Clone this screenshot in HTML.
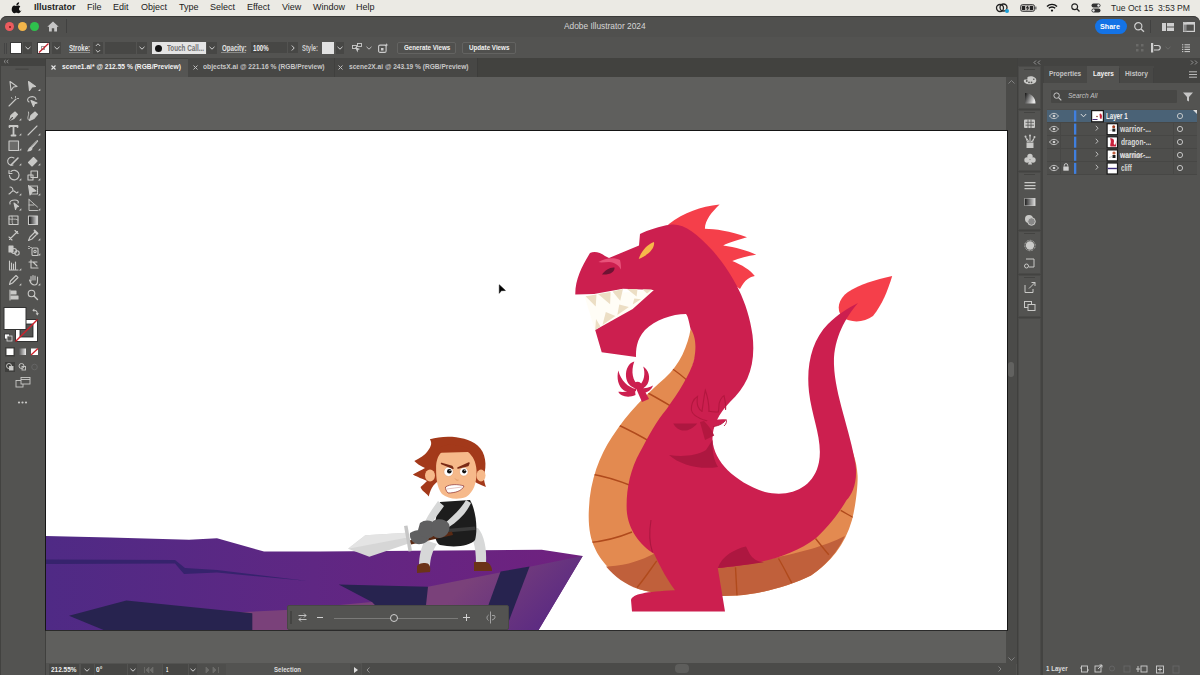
<!DOCTYPE html>
<html><head><meta charset="utf-8">
<style>
*{margin:0;padding:0;box-sizing:border-box}
html,body{width:1200px;height:675px;overflow:hidden;background:#e9e7e2;font-family:"Liberation Sans",sans-serif;position:relative}
.a{position:absolute}
.t{position:absolute;line-height:1;white-space:nowrap}
svg{position:absolute;overflow:visible}
#menubar{left:0;top:0;width:1200px;height:16px;background:#ebeae4;color:#222;font-size:9px}
#win{left:0;top:16px;width:1200px;height:659px;background:#535351;border-radius:7px 7px 0 0}
.ctl{color:#d8d8d8;font-size:7.2px}
.dk{background:#474745}
.chev{position:absolute}
</style></head><body>
<!-- MENUBAR -->
<div id="menubar" class="a">
 <svg style="left:13px;top:2px" width="9" height="11" viewBox="0 0 9 11"><path d="M6.1 0.2c0.1 0.9-0.3 1.7-0.8 2.200-0.5 0.5-1.200 0.900-1.900 0.800-0.1-0.800 0.3-1.600 0.800-2.100 0.600-0.500 1.300-0.900 1.900-0.900zM8.6 7.9c-0.300 0.600-0.500 1-0.900 1.600-0.600 0.900-1.300 1.700-2.200 1.700-0.800 0-1.100-0.500-2.100-0.500-1 0-1.300 0.500-2.100 0.500-0.900 0-1.600-0.900-2.100-1.700C-1.800 7.400-1 4.200 0.600 3.700c0.900-0.300 1.700 0.200 2.300 0.200 0.600 0 1.300-0.500 2.300-0.300 0.500 0 1.500 0.200 2.100 1.100-1.900 1.100-1.500 3.800 0.300 4.300z" fill="#111"/></svg>
 <span class="t" style="left:34px;top:3px;font-weight:bold">Illustrator</span>
 <span class="t" style="left:87px;top:3px">File</span>
 <span class="t" style="left:113px;top:3px">Edit</span>
 <span class="t" style="left:141px;top:3px">Object</span>
 <span class="t" style="left:179px;top:3px">Type</span>
 <span class="t" style="left:210px;top:3px">Select</span>
 <span class="t" style="left:247px;top:3px">Effect</span>
 <span class="t" style="left:282px;top:3px">View</span>
 <span class="t" style="left:313px;top:3px">Window</span>
 <span class="t" style="left:356px;top:3px">Help</span>
 <!-- status icons -->
 <svg style="left:996px;top:3px" width="14" height="10" viewBox="0 0 14 10"><circle cx="4" cy="5" r="3.5" fill="none" stroke="#222" stroke-width="1.3"/><circle cx="7.5" cy="4.5" r="3.5" fill="none" stroke="#222" stroke-width="1.3"/><circle cx="11" cy="8" r="2" fill="#1aa0d8"/></svg>
 <svg style="left:1020px;top:4px" width="17" height="8" viewBox="0 0 17 8"><rect x="0.6" y="0.6" width="14" height="6.8" rx="2" fill="#b8b6b2" stroke="#444" stroke-width="1"/><rect x="15.2" y="2.6" width="1.3" height="2.8" fill="#666"/><rect x="2" y="2" width="3" height="4" fill="#222"/><rect x="10" y="2" width="3" height="4" fill="#222"/><path d="M8.3 1L5.8 4.3H7.6L6.6 7L9.4 3.6H7.7Z" fill="#111"/></svg>
 <svg style="left:1046px;top:3px" width="12" height="9" viewBox="0 0 12 9"><path d="M1 3.5a7 7 0 0 1 10 0M2.8 5.3a4.5 4.5 0 0 1 6.4 0" fill="none" stroke="#111" stroke-width="1.4"/><circle cx="6" cy="7.6" r="1.1" fill="#111"/></svg>
 <svg style="left:1071px;top:3px" width="9" height="9" viewBox="0 0 9 9"><circle cx="3.7" cy="3.7" r="2.9" fill="none" stroke="#222" stroke-width="1.2"/><path d="M5.8 5.8L8.5 8.5" stroke="#222" stroke-width="1.3"/></svg>
 <svg style="left:1091px;top:3px" width="10" height="10" viewBox="0 0 10 10"><rect x="0.5" y="0.5" width="9" height="4" rx="2" fill="#333"/><rect x="0.5" y="5.5" width="9" height="4" rx="2" fill="#333"/><circle cx="7.5" cy="2.5" r="1.2" fill="#eee"/><circle cx="2.5" cy="7.5" r="1.2" fill="#eee"/></svg>
 <span class="t" style="left:1111px;top:3.5px;font-size:8.6px;color:#2a2a2a">Tue Oct 15</span>
 <span class="t" style="left:1158px;top:3.5px;font-size:8.6px;color:#2a2a2a">3:53 PM</span>
</div>
<div id="win" class="a"></div>
<!-- TITLEBAR -->
<div class="a" style="left:0;top:15.500px;width:1200px;height:22px;background:#50504e;border-radius:7px 7px 0 0;border-top:1px solid #3a3a38;border-bottom:1px solid #3e3e3c"></div>
<div class="a" style="left:5px;top:22px;width:9px;height:9px;border-radius:50%;background:#ec5b5e"></div>
<div class="a" style="left:8.5px;top:25.5px;width:2px;height:2px;border-radius:50%;background:#7a1518"></div>
<div class="a" style="left:18px;top:22px;width:9px;height:9px;border-radius:50%;background:#f2b54a"></div>
<div class="a" style="left:30px;top:22px;width:9px;height:9px;border-radius:50%;background:#2fc24d"></div>
<svg style="left:47px;top:21px" width="12" height="11" viewBox="0 0 12 11"><path d="M6 0.5L0.3 5.8H2V10.5H4.8V7.3H7.2V10.5H10V5.8H11.7Z" fill="#c6c6c6"/></svg>
<div class="a" style="left:66px;top:19px;width:1px;height:14px;background:#414140"></div>
<span class="t" style="left:563.75px;top:22.26px;font-size:8.55px;color:#d6d6d6;transform:scaleX(0.976);transform-origin:0 0;">Adobe Illustrator 2024</span>
<div class="a" style="left:1095px;top:19px;width:32px;height:15px;border-radius:8px;background:#1473e6"></div>
<span class="t" style="left:1100.40px;top:22.85px;font-size:7.97px;color:#ffffff;transform:scaleX(0.898);transform-origin:0 0;font-weight:bold;">Share</span>
<svg style="left:1134px;top:22px" width="11" height="10" viewBox="0 0 11 10"><circle cx="4.3" cy="4.3" r="3.6" fill="none" stroke="#cfcfcf" stroke-width="1.2"/><path d="M7 7L10 9.8" stroke="#cfcfcf" stroke-width="1.3"/></svg>
<div class="a" style="left:1150px;top:20px;width:1px;height:13px;background:#414140"></div>
<svg style="left:1162px;top:23px" width="12" height="8" viewBox="0 0 12 8"><rect x="0" y="0" width="4" height="8" fill="#cfcfcf"/><rect x="5" y="0" width="7" height="3.5" fill="#cfcfcf"/><rect x="5" y="4.5" width="7" height="3.5" fill="#cfcfcf"/></svg>
<svg style="left:1183px;top:22px" width="12" height="10" viewBox="0 0 12 10"><rect x="0.6" y="0.6" width="10.8" height="8.8" fill="none" stroke="#cfcfcf" stroke-width="1.2"/><rect x="0.6" y="0.6" width="3" height="8.8" fill="#888"/><rect x="0.6" y="0.6" width="10.8" height="2" fill="#cfcfcf"/></svg>
<!-- CONTROL BAR -->
<div class="a" style="left:0;top:37px;width:1200px;height:21px;background:#535351"></div>
<div class="a" style="left:4px;top:43px;width:1px;height:11px;background:#444"></div>
<div class="a" style="left:6px;top:43px;width:1px;height:11px;background:#444"></div>
<div class="a" style="left:10px;top:42px;width:12px;height:12px;background:#fff;border:1px solid #3a3a3a"></div>
<div class="a dk" style="left:23px;top:42px;width:9px;height:12px"></div>
<svg style="left:25px;top:46px" width="6" height="4" viewBox="0 0 6 4"><path d="M0.5 0.8L3 3.2L5.5 0.8" fill="none" stroke="#d0d0d0" stroke-width="1"/></svg>
<div class="a" style="left:37px;top:42px;width:13px;height:12px;background:#fff;border:1px solid #3a3a3a"></div>
<div class="a" style="left:41px;top:46px;width:4px;height:4px;border:1px solid #999"></div>
<svg style="left:38px;top:43px" width="11" height="10" viewBox="0 0 11 10"><path d="M1 9.5L10.5 0.5" stroke="#c4202a" stroke-width="1.2"/></svg>
<div class="a dk" style="left:52px;top:42px;width:9px;height:12px"></div>
<svg style="left:54px;top:46px" width="6" height="4" viewBox="0 0 6 4"><path d="M0.5 0.8L3 3.2L5.5 0.8" fill="none" stroke="#d0d0d0" stroke-width="1"/></svg>
<span class="t" style="left:68.70px;top:43.64px;font-size:8.70px;color:#e4e4e4;transform:scaleX(0.704);transform-origin:0 0;font-weight:bold;">Stroke:</span>
<div class="a dk" style="left:93px;top:42px;width:10px;height:12px"></div>
<svg style="left:95px;top:43px" width="6" height="10" viewBox="0 0 6 10"><path d="M0.8 3L3 0.8L5.2 3M0.8 7L3 9.2L5.2 7" fill="none" stroke="#d0d0d0" stroke-width="0.9"/></svg>
<div class="a dk" style="left:105px;top:42px;width:31px;height:12px"></div>
<div class="a dk" style="left:137px;top:42px;width:10px;height:12px"></div>
<svg style="left:139px;top:46px" width="6" height="4" viewBox="0 0 6 4"><path d="M0.5 0.8L3 3.2L5.5 0.8" fill="none" stroke="#d0d0d0" stroke-width="1"/></svg>
<div class="a" style="left:152px;top:42px;width:54px;height:12px;background:#e4e4e4"></div>
<div class="a" style="left:154.5px;top:44.5px;width:7px;height:7px;border-radius:50%;background:#111"></div>
<span class="t" style="left:166.90px;top:43.88px;font-size:8.41px;color:#707070;transform:scaleX(0.748);transform-origin:0 0;font-weight:bold;">Touch Call...</span>
<div class="a dk" style="left:207px;top:42px;width:10px;height:12px"></div>
<svg style="left:209px;top:46px" width="6" height="4" viewBox="0 0 6 4"><path d="M0.5 0.8L3 3.2L5.5 0.8" fill="none" stroke="#d0d0d0" stroke-width="1"/></svg>
<span class="t" style="left:221.50px;top:43.64px;font-size:8.70px;color:#e4e4e4;transform:scaleX(0.707);transform-origin:0 0;font-weight:bold;">Opacity:</span>
<div class="a dk" style="left:251px;top:42px;width:36px;height:11px"></div>
<span class="t" style="left:252.90px;top:43.88px;font-size:8.41px;color:#f0f0f0;transform:scaleX(0.725);transform-origin:0 0;font-weight:bold;">100%</span>
<div class="a dk" style="left:288px;top:42px;width:10px;height:11px"></div>
<svg style="left:291px;top:45px" width="4" height="6" viewBox="0 0 4 6"><path d="M0.8 0.5L3.2 3L0.8 5.5" fill="none" stroke="#d0d0d0" stroke-width="1"/></svg>
<span class="t" style="left:301.80px;top:43.64px;font-size:8.70px;color:#d0d0d0;transform:scaleX(0.675);transform-origin:0 0;font-weight:bold;">Style:</span>
<div class="a" style="left:322px;top:42px;width:12px;height:12px;background:#e2e2e2"></div>
<div class="a dk" style="left:336px;top:42px;width:8px;height:12px"></div>
<svg style="left:337px;top:46px" width="6" height="4" viewBox="0 0 6 4"><path d="M0.5 0.8L3 3.2L5.5 0.8" fill="none" stroke="#d0d0d0" stroke-width="1"/></svg>
<svg style="left:352px;top:43px" width="10" height="10" viewBox="0 0 10 10"><rect x="0.5" y="2.5" width="4" height="3" fill="none" stroke="#ccc" stroke-width="0.9"/><rect x="5.5" y="0.5" width="4" height="3" fill="none" stroke="#ccc" stroke-width="0.9"/><path d="M3 4L8 6L6 7L5.5 9.5Z" fill="#ccc"/></svg>
<svg style="left:366px;top:46px" width="6" height="4" viewBox="0 0 6 4"><path d="M0.5 0.8L3 3.2L5.5 0.8" fill="none" stroke="#c0c0c0" stroke-width="1"/></svg>
<svg style="left:378px;top:43px" width="11" height="10" viewBox="0 0 11 10"><rect x="0.6" y="2.1" width="7.5" height="7.3" rx="1.5" fill="none" stroke="#ccc" stroke-width="1.1"/><rect x="3" y="5" width="2.5" height="2.5" fill="#ccc"/><path d="M8.5 0L9 1.5L10.5 2L9 2.5L8.5 4L8 2.5L6.5 2L8 1.5Z" fill="#ccc"/></svg>
<div class="a" style="left:397px;top:42px;width:59px;height:12px;border:1px solid #636361;border-radius:2px;background:#50504e"></div>
<span class="t" style="left:403.50px;top:43.93px;font-size:8.12px;color:#f0f0f0;transform:scaleX(0.768);transform-origin:0 0;font-weight:bold;">Generate Views</span>
<div class="a" style="left:462px;top:42px;width:54px;height:12px;border:1px solid #636361;border-radius:2px;background:#50504e"></div>
<span class="t" style="left:468.60px;top:43.93px;font-size:8.12px;color:#f0f0f0;transform:scaleX(0.768);transform-origin:0 0;font-weight:bold;">Update Views</span>
<svg style="left:1136px;top:44px" width="8" height="8" viewBox="0 0 8 8"><rect x="0" y="0" width="2.5" height="2.5" fill="#6a6a68"/><rect x="5" y="0" width="2.5" height="2.5" fill="#6a6a68"/><rect x="0" y="5" width="2.5" height="2.5" fill="#6a6a68"/><rect x="5" y="5" width="2.5" height="2.5" fill="#6a6a68"/></svg>
<svg style="left:1151px;top:43px" width="10" height="10" viewBox="0 0 10 10"><rect x="0" y="0" width="2.2" height="9.5" fill="#cfcfcf"/><path d="M3 2.5H7A2.2 2.2 0 0 1 7 7H3" fill="none" stroke="#cfcfcf" stroke-width="1.2"/></svg>
<svg style="left:1165px;top:46px" width="6" height="4" viewBox="0 0 6 4"><path d="M0.5 0.8L3 3.2L5.5 0.8" fill="none" stroke="#6a6a68" stroke-width="1"/></svg>
<svg style="left:1182px;top:44px" width="8" height="8" viewBox="0 0 8 8"><path d="M2.5 0.8H8M2.5 3.1H8M2.5 5.4H8M2.5 7.6H8M0 0.8H1.3M0 3.1H1.3M0 5.4H1.3M0 7.6H1.3" stroke="#cfcfcf" stroke-width="1"/></svg>
<div class="a" style="left:68.5px;top:52px;width:21.5px;height:1px;background:#8a8a88"></div>
<div class="a" style="left:221.3px;top:52px;width:25px;height:1px;background:#8a8a88"></div>
<!-- REST -->
<div class="a" style="left:0;top:58px;width:45px;height:617px;background:#535351;border-left:1px solid #424240"></div>
<div class="a" style="left:0;top:58px;width:45px;height:8px;background:#434341"></div>
<div class="a" style="left:45px;top:58px;width:1px;height:617px;background:#40403e"></div>
<!-- tabs -->
<div class="a" style="left:46px;top:58px;width:971px;height:19px;background:#42423f"></div>
<div class="a" style="left:188px;top:58px;width:289px;height:19px;background:#474745"></div>
<div class="a" style="left:46px;top:59px;width:142px;height:18px;background:#555553"></div>
<div class="a" style="left:334px;top:58px;width:1px;height:19px;background:#40403e"></div>
<div class="a" style="left:477px;top:58px;width:1px;height:19px;background:#3d3d3b"></div>
<svg style="left:50.5px;top:65px" width="5" height="5" viewBox="0 0 5 5"><path d="M0.5 0.5L4.5 4.5M4.5 0.5L0.5 4.5" stroke="#e6e6e6" stroke-width="1.1"/></svg>
<span class="t" style="left:61.50px;top:62.83px;font-size:8.12px;color:#f2f2f2;transform:scaleX(0.820);transform-origin:0 0;font-weight:bold;">scene1.ai* @ 212.55 % (RGB/Preview)</span>
<svg style="left:192.5px;top:65px" width="5" height="5" viewBox="0 0 5 5"><path d="M0.5 0.5L4.5 4.5M4.5 0.5L0.5 4.5" stroke="#bdbdbd" stroke-width="1"/></svg>
<span class="t" style="left:203.20px;top:62.83px;font-size:8.12px;color:#c8c8c8;transform:scaleX(0.821);transform-origin:0 0;font-weight:bold;">objectsX.ai @ 221.16 % (RGB/Preview)</span>
<svg style="left:338px;top:65px" width="5" height="5" viewBox="0 0 5 5"><path d="M0.5 0.5L4.5 4.5M4.5 0.5L0.5 4.5" stroke="#bdbdbd" stroke-width="1"/></svg>
<span class="t" style="left:349.20px;top:62.83px;font-size:8.12px;color:#c8c8c8;transform:scaleX(0.812);transform-origin:0 0;font-weight:bold;">scene2X.ai @ 243.19 % (RGB/Preview)</span>
<!-- canvas -->
<div class="a" style="left:46px;top:77px;width:960px;height:587px;background:#5f5f5d"></div>
<div class="a" style="left:1006px;top:77px;width:11px;height:587px;background:#4b4b49"></div>
<div class="a" style="left:1017px;top:58px;width:1px;height:617px;background:#40403e"></div>
<div id="artboard" class="a" style="left:45px;top:130px;width:963px;height:501px;background:#fff;border:1px solid #151515;border-bottom-color:#2a2a2a"></div>
<svg style="left:1008px;top:80px" width="7" height="4" viewBox="0 0 7 4"><path d="M0.5 3.5L3.5 0.5L6.5 3.5" fill="none" stroke="#888" stroke-width="0.9"/></svg>
<div class="a" style="left:1008px;top:362px;width:6px;height:15px;border-radius:3px;background:#626260"></div>
<svg style="left:1008px;top:657px" width="7" height="4" viewBox="0 0 7 4"><path d="M0.5 0.5L3.5 3.5L6.5 0.5" fill="none" stroke="#888" stroke-width="0.9"/></svg>
<!-- status bar -->
<div class="a" style="left:46px;top:663px;width:970px;height:12px;background:#535351"></div>
<div class="a" style="left:362px;top:663px;width:654px;height:12px;background:#4b4b49"></div>
<div class="a" style="left:675px;top:664px;width:14px;height:9px;border-radius:4px;background:#5e5e5c"></div>
<svg style="left:998px;top:666px" width="4" height="6" viewBox="0 0 4 6"><path d="M0.5 0.5L3 3L0.5 5.5" fill="none" stroke="#888" stroke-width="0.9"/></svg>
<div class="a dk" style="left:49px;top:664px;width:30px;height:11px"></div>
<span class="t" style="left:51.00px;top:666.43px;font-size:8.12px;color:#f0f0f0;transform:scaleX(0.795);transform-origin:0 0;font-weight:bold;">212.55%</span>
<div class="a dk" style="left:81px;top:664px;width:13px;height:11px"></div>
<svg style="left:84px;top:668px" width="6" height="4" viewBox="0 0 6 4"><path d="M0.5 0.8L3 3.2L5.5 0.8" fill="none" stroke="#d0d0d0" stroke-width="1"/></svg>
<div class="a dk" style="left:95px;top:664px;width:32px;height:11px"></div>
<span class="t" style="left:96.00px;top:666.43px;font-size:8.12px;color:#f0f0f0;transform:scaleX(0.813);transform-origin:0 0;font-weight:bold;">0&#176;</span>
<div class="a dk" style="left:128px;top:664px;width:9px;height:11px"></div>
<svg style="left:130px;top:668px" width="6" height="4" viewBox="0 0 6 4"><path d="M0.5 0.8L3 3.2L5.5 0.8" fill="none" stroke="#d0d0d0" stroke-width="1"/></svg>
<div class="a" style="left:137px;top:664px;width:25px;height:11px;background:#4e4e4c"></div>
<svg style="left:144px;top:667px" width="16" height="6" viewBox="0 0 16 6"><path d="M0.5 0V6M5 0L2 3L5 6Z M9 0L6 3L9 6Z" fill="#6c6c6a" stroke="#6c6c6a" stroke-width="0.8"/></svg>
<div class="a dk" style="left:163px;top:664px;width:25px;height:11px"></div>
<span class="t" style="left:166.00px;top:666.43px;font-size:8.12px;color:#f0f0f0;transform:scaleX(0.511);transform-origin:0 0;font-weight:bold;">1</span>
<div class="a dk" style="left:189px;top:664px;width:8px;height:11px"></div>
<svg style="left:190px;top:668px" width="6" height="4" viewBox="0 0 6 4"><path d="M0.5 0.8L3 3.2L5.5 0.8" fill="none" stroke="#d0d0d0" stroke-width="1"/></svg>
<div class="a" style="left:197px;top:664px;width:29px;height:11px;background:#4e4e4c"></div>
<svg style="left:206px;top:667px" width="16" height="6" viewBox="0 0 16 6"><path d="M0 0L3 3L0 6Z M7 0L10 3L7 6Z M12.5 0V6" fill="#6c6c6a" stroke="#6c6c6a" stroke-width="0.8"/></svg>
<span class="t" style="left:274.40px;top:666.43px;font-size:8.12px;color:#dddddd;transform:scaleX(0.751);transform-origin:0 0;font-weight:bold;">Selection</span>
<div class="a" style="left:350px;top:664px;width:11px;height:11px;background:#4e4e4c"></div>
<svg style="left:354px;top:667px" width="4" height="6" viewBox="0 0 4 6"><path d="M0 0L4 3L0 6Z" fill="#ddd"/></svg>
<svg style="left:366px;top:667px" width="4" height="6" viewBox="0 0 4 6"><path d="M3.5 0.5L1 3L3.5 5.5" fill="none" stroke="#999" stroke-width="0.9"/></svg>
<!-- right side -->
<div class="a" style="left:1018px;top:58px;width:182px;height:617px;background:#434341"></div>
<div class="a" style="left:1044px;top:66px;width:110px;height:17px;background:#484846"></div>
<svg style="left:1033px;top:60px" width="8" height="5" viewBox="0 0 8 5"><path d="M3 0.5L1 2.5L3 4.5M7 0.5L5 2.5L7 4.5" fill="none" stroke="#aaa" stroke-width="0.8"/></svg>
<svg style="left:1190px;top:60px" width="8" height="5" viewBox="0 0 8 5"><path d="M1 0.5L3 2.5L1 4.5M5 0.5L7 2.5L5 4.5" fill="none" stroke="#aaa" stroke-width="0.8"/></svg>
<div id="strip" class="a" style="left:1018px;top:66px;width:23px;height:609px"></div>
<div class="a" style="left:1043px;top:83px;width:157px;height:592px;background:#535351"></div>
<div class="a" style="left:1087px;top:66px;width:32px;height:17px;background:#535351"></div>
<div class="a" style="left:1119px;top:68px;width:1px;height:15px;background:#414140"></div>
<div class="a" style="left:1153px;top:68px;width:1px;height:15px;background:#414140"></div>
<span class="t" style="left:1048.90px;top:70.32px;font-size:7.54px;color:#c4c4c4;transform:scaleX(0.864);transform-origin:0 0;font-weight:bold;">Properties</span>
<span class="t" style="left:1092.90px;top:70.32px;font-size:7.54px;color:#f4f4f4;transform:scaleX(0.860);transform-origin:0 0;font-weight:bold;">Layers</span>
<span class="t" style="left:1124.90px;top:70.32px;font-size:7.54px;color:#c4c4c4;transform:scaleX(0.882);transform-origin:0 0;font-weight:bold;">History</span>
<svg style="left:1189px;top:71px" width="8" height="7" viewBox="0 0 8 7"><path d="M0 0.8H8M0 3.5H8M0 6.2H8" stroke="#bbb" stroke-width="1"/></svg>
<!-- ARTWORK -->
<svg style="left:46px;top:131px;overflow:hidden" width="960" height="499" viewBox="46 131 960 499">
<defs>
<linearGradient id="cliffTop" x1="46" y1="0" x2="580" y2="0" gradientUnits="userSpaceOnUse"><stop offset="0" stop-color="#4f2a85"/><stop offset="0.5" stop-color="#5f2783"/><stop offset="1" stop-color="#70217f"/></linearGradient>
<linearGradient id="cliffFront" x1="480" y1="570" x2="540" y2="631" gradientUnits="userSpaceOnUse"><stop offset="0" stop-color="#7a417a"/><stop offset="1" stop-color="#5c2b82"/></linearGradient>
</defs>
<!-- CLIFF -->
<path d="M40 535.900L110 537.500L189 539.800L217 538.200L264 551.500L320 551.500L541.700 549.800L582.700 556.100L538 631H40Z" fill="url(#cliffTop)"/>
<path d="M240 612.200L285.900 610L372 602L428 586.800L532 566.200L582.700 556.100L538 631H240Z" fill="url(#cliffFront)"/>
<path d="M40 559.500L175 560L185 568L217 570L308 581L217 572.500L184 574L175 563.500L40 564Z" fill="#36236d"/>
<path d="M69 615.700L126.300 600.500L252.300 613.300L252.300 631H106Z" fill="#27234f"/>
<path d="M338.700 584.400L428 586.800L423.200 631H400L372 602Z" fill="#27234f"/>
<path d="M500.600 571.500L529.600 566.500L505 631H479Z" fill="#27234f"/>
<!-- DRAGON: orange belly -->
<path d="M690.600 329C688 345 680 365 665 378C648 393 628 412 612 437C600 455 590 480 588.900 508.900C588 525 590 538 594.800 548C600 560 612 575 638.400 589C660 596 700 597 737 595.500C760 594 790 586 811 575.500C830 563 845 545 852 520C857 500 858 480 857.500 475C857 462 852 448 846 436L820 515L720 540L660 480L700 340Z" fill="#e38a50"/>
<!-- dark band -->
<path d="M606 566.400C615 577 625 584 638.400 589C660 596 700 597 737 595.500C760 594 790 586 811 575.500C825 566 837 553 845 536C835 541 822 546 811 548.900C795 553 780 557 760 561C745 564 730 567 717.800 568L654 553.800C641 560 630 565 608 566.400Z" fill="#c0603b"/>
<!-- stripes -->
<clipPath id="orClip"><path d="M690.600 329C688 345 680 365 665 378C648 393 628 412 612 437C600 455 590 480 588.900 508.900C588 525 590 538 594.800 548C600 560 612 575 638.400 589C660 596 700 597 737 595.500C760 594 790 586 811 575.500C830 563 845 545 852 520C857 500 858 480 857.500 475C857 462 852 448 846 436L820 515L720 540L660 480L700 340Z"/></clipPath>
<g fill="none" stroke="#b04a1c" stroke-width="1.400" clip-path="url(#orClip)">
<path d="M668 366C676 371 684 377 692 385"/>
<path d="M644 391C654 396 664 402 674 408"/>
<path d="M612 422C625 428 638 434 652 443"/>
<path d="M585 473C600 475 615 479 632 486"/>
<path d="M585 543C600 542 615 539 632 532"/>
<path d="M637 587.500C645 578 650 570 656.700 560.800"/>
<path d="M735.500 567.400L737 595.500"/>
<path d="M778.500 558.500C783 566 787 574 791.800 583"/>
<path d="M815.500 538.500C820 544 824 549 828.800 554.800"/>
<path d="M840.700 510.400C845 513 849 515 854 518"/>
</g>
<!-- crest -->
<path d="M668.300 224.500C685 212 700 207 719.600 204.600C712 212 705 220 704.900 228.800C715 229 730 231 747 237.200C738 240 729 242 723.200 245.600C735 247 748 251 756.200 254.800C748 256 739 258 732.300 261.100C742 265 750 270 754.800 275.900C750 277 745 279 740 289L700 260L670 240Z" fill="#f53f4a"/>
<!-- tail leaf -->
<path d="M892.200 276C875 280 860 284 848 292C838 299 836 310 842.300 317C850 323 864 323 873 316C882 305 888 290 892.200 276Z" fill="#f53f4a"/>
<path d="M584.600 296.400L655 289.600L640 320L595.200 331Z" fill="#fffdf6"/>
<!-- red body -->
<path d="M590 253C594 251 600 252 605 256L609 258L639 245.500L640 234C648 230 660 226 670 224.700C684 223 696 233 713 251C731 272 748 300 752.500 335C756 365 748 385 730 402C718 414 712 428 712.500 440C714 462 735 482 765 492C790 498 814 488 819 462C823 440 812 418 809 392C806 365 812 340 828 324C838 314 848 308 858 303C845 318 833 340 834 365C835 395 850 430 855.500 464C858 482 852 495 846.600 500C838 515 825 530 815.500 538.500C800 550 780 558 759.200 562.200C745 565 730 567 717.800 568L725 611.500H632L631 600C633 594 645 591.700 675 590.300C664 575 658 562 654 553.800C640 545 628 530 626.700 510C626 490 630 470 640 452C648 437 657 420 666.700 408.900C678 393 690 375 694 360C697 345 695 335 690.600 329C689 322 688 316 686 314C672 314 655 320 645 330C636 340 636 350 636 357L601.700 352.200L595.200 330L632.700 308.900L653.900 290L623 288.700L594 294L575.300 294.600C575 280 582 266 590 253Z" fill="#cc1f4f"/>
<!-- shading -->
<path d="M717.800 568C722 556 735 549 746 546.600C748 550 749 554 752 557C756 561 760 562 763.700 562.200C745 565 730 567 717.800 568Z" fill="#ad1740"/>
<path d="M669 455C680 465 700 470 718 467C714 460 712 452 712.500 440L706 450C696 456 682 457 669 455Z" fill="#ad1740"/>
<path d="M673.300 423.400L697.200 423.400C693 428 689 430.500 684 430.500C679 430.500 675 427 673.300 423.400Z" fill="#ad1740"/>
<path d="M651 520C649 532 650 545 652.500 552.300" fill="none" stroke="#ad1740" stroke-width="1.100"/>
<!-- teeth -->

<g fill="#ecdec4">
<path d="M585.600 296.200L595.700 306.500L596.500 294.500Z"/>
<path d="M598 294L610.100 304.200L610.600 292Z"/>
<path d="M612.500 291.500L620.200 300.700L623 289Z"/>
<path d="M627 289L636.600 296.400L637.500 289Z"/>
<path d="M642.400 289.200L647 293.500L652 289.500Z"/>
<path d="M595.200 330L596 319L600.500 326.600Z"/>
<path d="M602.500 325L605.800 312L615.400 316.100Z"/>
<path d="M617.300 315L619.300 304.500L628.900 307Z"/>
<path d="M632.700 304.500L634.300 298.500L641 299.200Z"/>
</g>
<!-- face details -->
<path d="M638.700 259C641 252 646 245 654 242C655 249 648 255 638.700 259Z" fill="#f7b84a"/>
<path d="M602 274.500C605 270 610 267 614.500 267.500C615 272 610 275 602 274.500Z" fill="#6e1333"/>
<path d="M598.400 262C605 258 614 257 620 260C621 264 621 267 621 269.500C619 266 615 262 609 262C605 262 601 263 598.400 262Z" fill="#e8527a"/>
<!-- left claw -->
<g fill="#cc1f4f">
<circle cx="637.500" cy="385.500" r="3.800"/>
<path d="M635 386L640.500 383L649 399L642 402Z"/>
<path d="M636 389C628 387 621 381 618.300 370.400C616.500 378 618 386 624 390.500C628 393 633 393 636 391Z"/>
<path d="M635 390.500C629 392 623 392 618.300 391.800C620 396 628 398.500 635.500 395Z"/>
<path d="M638 385C633 381 630.500 372 634.300 361.600C629 363 625.500 369 626 376.500C626.500 383 631 387.500 636 388.500Z"/>
<path d="M639 386C644.500 381 645.500 373 643.200 366.400C648.500 370 651 377 647.500 384C645.500 387.500 642 389.500 639 389.500Z"/>
<path d="M640 388.500C645 388.500 650 387.500 653 385.600C651.500 390.500 646 394 640 393Z"/>
</g>
<!-- right claw outline -->
<path d="M704 421C708 425 712 430 714.200 435.500L705 440L700 422Z" fill="#b3173f"/>
<g fill="none" stroke="#b3173f" stroke-width="1.100" stroke-linecap="round">
<path d="M706.900 420.900C700 419 692 415 691.400 410C691 405 693 399 697.500 396.400C697 400 697 404 698 406.500C699 409 700 410.500 702 411.300"/>
<path d="M702 411.300C703 405 704 396 705.300 390.300C707 395 709 403 709 411.300"/>
<path d="M709 411.300C712 412 716 412 718.300 411.900C719 408 719 405 719.100 403.700C720 400 722 397 724 395.600C725 400 726 405 725.600 409.400"/>
</g>
<path d="M706 421C712 420 720 419 726 419.500C724 423 719 426 713 426.500Z" fill="#cc1f4f"/>
<path d="M713 426.500C719 426 724 423 726 419.500C727 421 726.500 424 724 426" fill="none" stroke="#b3173f" stroke-width="0.9"/>
<!-- WARRIOR -->
<g>
<path d="M425 540C421 548 419 556 419 566L430 567C430 558 433 550 437 544Z" fill="#d7d8d8"/>
<path d="M466 531C473 536 476 546 476 563L486 564C487 548 484 535 478 528Z" fill="#d7d8d8"/>
<path d="M417 567C417 564 421 563 425 563C429 563 431 566 430 572L417 573Z" fill="#6b3318"/>
<path d="M474 562L486 562C490 563 492 567 492 571L474 571Z" fill="#6b3318"/>
<path d="M440 502L470 500C476 510 478 530 475 540C470 546 455 548 440 545C432 541 434 520 440 502Z" fill="#1d1d1d"/>
<path d="M466 500L471 503C466 514 457 522 449 527L444 524C452 517 461 509 466 500Z" fill="#d7d8d8"/>
<path d="M438 501C433 508 427 516 424 524L430 526C434 519 440 512 444 506Z" fill="#d7d8d8"/>
<path d="M446 529L475 526.500L475.500 530L447 532.500Z" fill="#3a3a3a"/><path d="M409 540.500L452 531.500L453 535L411 544.500Z" fill="#5a2a14"/>
<path d="M410 533C416 529 424 529 428 533C431 538 428 543 421 544C414 545 409 540 410 533Z" fill="#5f5f60"/>
<path d="M420 523C425 519 432 520 436 524C438 530 436 536 430 538C424 539 419 535 418 530Z" fill="#5f5f60"/>
<path d="M433 521C438 518 446 519 449 524C451 530 447 537 440 538C434 539 431 533 431 528Z" fill="#5f5f60"/>
<path d="M348 548.700L365.300 535.300L406.700 532.700L409.300 543.300L369.300 556.700Z" fill="#d6d6d6"/>
<path d="M348 548.700L365.300 535.300L406.700 532.700L407.500 537.500Z" fill="#e4e4e4"/>
<path d="M404 526L407.500 525.500L412 551L408.500 551.500Z" fill="#c6c6c6"/>
<path d="M429.900 439.300C445 435 466 436 477.600 445.600C486 453 487 465 483.800 476.700C484 481 485 484 485.900 487C480 485 475 482 472 480L440 480C432 484 430 492 428.800 496.400C425 492 421 490 420.600 487C423 485 425 483 427 481C420 478 415 476 412.800 474.600C417 472 422 470 425 468C420 466 416 463 414.300 461.100C420 458 425 455 427 452C430 448 433 444 429.900 439.300Z" fill="#a3391a"/>
<ellipse cx="430" cy="475.500" rx="5" ry="6" fill="#f6b98a"/>
<ellipse cx="481" cy="475.500" rx="4.500" ry="6" fill="#f6b98a"/>
<path d="M441 452.800L468 452C473 456 476 462 476.500 470C477 482 474 492 466 497C458 500 448 499 442 494C437 488 436 478 436.100 468C436 461 438 456 441 452.800Z" fill="#f6b98a"/>
<path d="M436 455C445 449 460 449 472 452C468 447 458 444 447 445C440 446 437 450 436 455Z" fill="#a3391a"/>
<circle cx="448.600" cy="471.800" r="4.700" fill="#fff" stroke="#e0a070" stroke-width="0.6"/><circle cx="463.800" cy="471.800" r="4.300" fill="#fff" stroke="#e0a070" stroke-width="0.6"/>
<circle cx="449.300" cy="471.300" r="2.300" fill="#111"/><circle cx="464.200" cy="471.300" r="2.100" fill="#111"/><circle cx="450" cy="470.500" r="0.600" fill="#fff"/><circle cx="464.900" cy="470.500" r="0.600" fill="#fff"/>
<path d="M441.500 463.500L453 468.300L452 466.500Z M458 468L469 463L468 465.500Z" stroke="#7a2a15" stroke-width="1.500" fill="#7a2a15" stroke-linejoin="round"/>
<path d="M455 478.500C456 480 457 480.500 458.500 480" fill="none" stroke="#d89060" stroke-width="0.8"/>
<path d="M445.500 487C450 484 458 484 464 486C462 491 455 493 448 493C446 491 445.500 489 445.500 487Z" fill="#fff" stroke="#8a2a2a" stroke-width="0.700"/>
<path d="M447 489C452 488 457 488 462 487" stroke="#c88" stroke-width="0.500"/>
</g>
</svg>
<svg style="left:498px;top:284px" width="8" height="10" viewBox="498 284 8 10"><path d="M499.300 284.800L505.400 290.500L501.300 290.700L499.300 293.300Z" fill="#000" stroke="#111" stroke-width="0.6" stroke-linejoin="round"/></svg>
<!-- zoom overlay -->
<div class="a" style="left:287px;top:605px;width:222px;height:25px;background:#535351;border:1px solid #474745;border-radius:2px"></div>
<div class="a" style="left:290px;top:611px;width:1.500px;height:13px;background:#444442"></div>
<svg style="left:298px;top:613px" width="9" height="9" viewBox="0 0 9 9"><path d="M0.500 2.500H8M6 0.500L8 2.500L6 4.500M8.500 6.500H1M3 4.500L1 6.500L3 8.500" fill="none" stroke="#cfcfcf" stroke-width="0.900"/></svg>
<div class="a" style="left:317px;top:617px;width:6px;height:1.200px;background:#d0d0d0"></div>
<div class="a" style="left:334px;top:618px;width:124px;height:1px;background:#7a7a78"></div>
<div class="a" style="left:390px;top:614px;width:8px;height:8px;border-radius:50%;border:1.200px solid #d0d0d0;background:#535351"></div>
<div class="a" style="left:463px;top:617px;width:7px;height:1.200px;background:#d0d0d0"></div>
<div class="a" style="left:466px;top:614px;width:1.200px;height:7px;background:#d0d0d0"></div>
<svg style="left:486px;top:611px" width="10" height="13" viewBox="0 0 10 13"><path d="M4.500 0.500V12.500M2.500 4C0.500 5.500 0.500 8 2.500 9.500M6 4.500H8.500C9.500 6 9 8 7 8.500L6 9" fill="none" stroke="#aaa" stroke-width="0.900"/></svg>
<!-- ICON STRIP -->
<svg style="left:1016px;top:58px" width="28" height="617" viewBox="1016 58 28 617">
<g fill="#535351" stroke="#4a4a48" stroke-width="1">
<rect x="1018.500" y="66.500" width="22" height="42"/>
<rect x="1018.500" y="110.500" width="22" height="60"/>
<rect x="1018.500" y="172.500" width="22" height="57"/>
<rect x="1018.500" y="231.500" width="22" height="42"/>
<rect x="1018.500" y="275.500" width="22" height="41"/>
<rect x="1018.500" y="318.500" width="22" height="360"/>
</g>
<g stroke="#444442" stroke-width="1.2">
<path d="M1024 69.500H1035M1024 112.500H1035M1024 174.500H1035M1024 233.500H1035M1024 277.500H1035"/>
</g>
<g fill="#c9c9c7">
<path d="M1030.500 76.300C1034 76.300 1036.300 78 1036.300 80.200C1036.300 82.800 1033.500 84.300 1029.800 84.300C1026.300 84.300 1023.800 83 1023.800 80.800C1023.800 79.600 1025 79.300 1026.200 79.500C1027.300 79.700 1027.800 79 1027.300 78.200C1027 77.200 1028.500 76.300 1030.500 76.300Z"/>
<path d="M1025 93V103.500H1035.500C1035.500 97.500 1031 93 1025 93Z" fill="url(#gq)"/>
<rect x="1024" y="119.500" width="11" height="8.500" rx="1"/>
<path d="M1026.500 142.500H1033.500V148H1026.500Z"/><path d="M1027.500 142L1025.500 136.500M1030 142V135.500M1032.500 142L1034.500 137M1029 142L1027 138.500M1031 142L1033.500 139" stroke="#c9c9c7" stroke-width="1" fill="none"/><circle cx="1025.500" cy="136.500" r="1"/><circle cx="1030" cy="135.500" r="1"/><circle cx="1034.500" cy="137" r="1"/>
<circle cx="1030" cy="156.500" r="2.700"/><circle cx="1027" cy="160" r="2.700"/><circle cx="1033" cy="160" r="2.700"/><path d="M1029.200 160L1028 164.500H1032L1030.800 160Z"/>
<path d="M1024.500 182H1035.500V183.300H1024.500Z M1024.500 185H1035.500V186.300H1024.500Z M1024.500 188H1035.500V189.300H1024.500Z"/>
<circle cx="1029" cy="219" r="4"/>
<circle cx="1030" cy="245.500" r="4.200"/>
</g>
<g fill="none" stroke="#c9c9c7" stroke-width="1">
<g fill="#535351" stroke="none"><circle cx="1026.800" cy="81" r="0.900"/><circle cx="1029" cy="82.300" r="0.900"/><circle cx="1031.500" cy="82.300" r="0.900"/><circle cx="1033.800" cy="79.200" r="0.800"/></g>
<path d="M1025.500 122.300H1034M1025.500 125.200H1034M1028 119.500V128M1031 119.500V128" stroke="#535351" stroke-width="0.8"/>
<rect x="1025" y="198.500" width="10" height="7"/>
<circle cx="1031.500" cy="221.500" r="3.800" fill="#888"/>
<circle cx="1030" cy="245.500" r="5.200" stroke-dasharray="0.8 0.8"/>
<path d="M1026 259H1034V267H1029"/><circle cx="1026.500" cy="266" r="2"/>
<path d="M1025 285V292.500H1033V289M1029 288.500L1035 282.500M1031.500 282.500H1035V286"/>
<rect x="1024.500" y="301.500" width="7" height="6"/><rect x="1028" y="304.500" width="7" height="6" fill="#535351"/>
</g>
<rect x="1025" y="198.500" width="10" height="7" fill="url(#gs)"/>
<defs><linearGradient id="gq" x1="0" y1="0" x2="1" y2="0.4"><stop offset="0" stop-color="#111"/><stop offset="0.15" stop-color="#333"/><stop offset="1" stop-color="#e8e8e8"/></linearGradient><linearGradient id="gs"><stop offset="0" stop-color="#222"/><stop offset="1" stop-color="#ddd"/></linearGradient></defs>
</svg>
<!-- LAYERS PANEL -->
<div class="a" style="left:1051px;top:90px;width:126px;height:13px;background:#474745;border-radius:1px"></div>
<svg style="left:1053px;top:92px" width="9" height="9" viewBox="0 0 9 9"><circle cx="3.600" cy="3.600" r="2.700" fill="none" stroke="#c6c6c6" stroke-width="1"/><path d="M5.600 5.600L8.300 8.300" stroke="#c6c6c6" stroke-width="1.200"/></svg>
<span class="t" style="left:1067.50px;top:93.18px;font-size:6.52px;color:#c4c4c4;transform:scaleX(0.999);transform-origin:0 0;font-style:italic;">Search All</span>
<svg style="left:1183px;top:92px" width="10" height="10" viewBox="0 0 10 10"><path d="M0 0.500H10L6 5V9.500L4 8.500V5Z" fill="#c6c6c6"/></svg>
<div class="a" style="left:1047px;top:109px;width:150px;height:66px;background:#4e4e4c"></div>
<div class="a" style="left:1047px;top:109.500px;width:150px;height:13px;background:#4a6276"></div>
<div class="a" style="left:1047px;top:122px;width:150px;height:1px;background:#474745"></div>
<div class="a" style="left:1047px;top:135px;width:150px;height:1px;background:#474745"></div>
<div class="a" style="left:1047px;top:148px;width:150px;height:1px;background:#474745"></div>
<div class="a" style="left:1047px;top:161px;width:150px;height:1px;background:#474745"></div>
<div class="a" style="left:1047px;top:174px;width:150px;height:1px;background:#474745"></div>
<div class="a" style="left:1060px;top:123px;width:1px;height:51px;background:#474745"></div>
<div class="a" style="left:1173px;top:123px;width:1px;height:51px;background:#474745"></div>
<svg style="left:1073.500px;top:110px" width="3" height="64" viewBox="0 0 3 64"><g fill="#3f7fdf"><rect x="0" y="0.500" width="2.300" height="11"/><rect x="0" y="13.600" width="2.300" height="11"/><rect x="0" y="26.700" width="2.300" height="11"/><rect x="0" y="39.800" width="2.300" height="11"/><rect x="0" y="52.900" width="2.300" height="11"/></g></svg>
<div class="a" style="left:1193px;top:110px;width:0;height:0;border-left:4px solid transparent;border-top:4px solid #ddd"></div>
<svg style="left:1048px;top:110px" width="12" height="64" viewBox="0 0 12 64">
<g fill="none" stroke="#cfcfcf" stroke-width="0.9"><path d="M1.500 6c2.500-3.500 6.500-3.500 9 0c-2.500 3.500-6.500 3.500-9 0z"/><path d="M1.500 19c2.500-3.500 6.500-3.500 9 0c-2.500 3.500-6.500 3.500-9 0z"/><path d="M1.500 32c2.500-3.500 6.500-3.500 9 0c-2.500 3.500-6.500 3.500-9 0z"/><path d="M1.500 58c2.500-3.500 6.500-3.500 9 0c-2.500 3.500-6.500 3.500-9 0z"/></g>
<g fill="#cfcfcf"><circle cx="6" cy="6" r="1.300"/><circle cx="6" cy="19" r="1.300"/><circle cx="6" cy="32" r="1.300"/><circle cx="6" cy="58" r="1.300"/></g>
</svg>
<svg style="left:1063px;top:163px" width="6" height="8" viewBox="0 0 6 8"><path d="M1.300 3.500V2.300a1.700 1.700 0 0 1 3.400 0V3.500" fill="none" stroke="#cfcfcf" stroke-width="0.9"/><rect x="0.300" y="3.500" width="5.400" height="4.200" fill="#cfcfcf"/></svg>
<svg style="left:1080px;top:113px" width="7" height="5" viewBox="0 0 7 5"><path d="M0.800 1L3.500 3.800L6.200 1" fill="none" stroke="#ddd" stroke-width="1"/></svg>
<svg style="left:1095px;top:125px" width="4" height="48" viewBox="0 0 4 48"><g fill="none" stroke="#ccc" stroke-width="0.9"><path d="M0.800 0.800L3 3.200L0.800 5.600"/><path d="M0.800 13.800L3 16.200L0.800 18.600"/><path d="M0.800 26.800L3 29.200L0.800 31.600"/><path d="M0.800 39.800L3 42.200L0.800 44.600"/></g></svg>
<svg style="left:1090px;top:110px" width="30" height="66" viewBox="1090 110 30 66">
<rect x="1091.600" y="110.600" width="11.800" height="11.200" fill="#fff" stroke="#1a1a1a" stroke-width="1.200"/>
<path d="M1099.500 114L1101 113.500L1102 116L1101.500 119L1100 118.500Z" fill="#c8203a"/><rect x="1092.500" y="119" width="5" height="1" fill="#4a2a7a"/><circle cx="1097" cy="116.500" r="0.800" fill="#8a3a2a"/>
<rect x="1107.100" y="123.700" width="10.400" height="11" fill="#fff" stroke="#1a1a1a" stroke-width="1.200"/>
<circle cx="1113.700" cy="126.800" r="1.500" fill="#a3391a"/><rect x="1112.300" y="128.600" width="3" height="3" fill="#1d1d1d"/><path d="M1109.500 130.500L1112 130" stroke="#bbb" stroke-width="0.700"/>
<rect x="1107.100" y="136.800" width="10.400" height="11" fill="#fff" stroke="#1a1a1a" stroke-width="1.200"/>
<path d="M1110 138.500C1112 138 1114 139 1114 141C1114 143 1113 144 1115 145C1116 144 1116 141 1116.500 140L1116 146.500H1110.500C1109.500 144 1112 142 1110 138.500Z" fill="#c8203a"/>
<rect x="1107.100" y="149.900" width="10.400" height="11" fill="#fff" stroke="#1a1a1a" stroke-width="1.200"/>
<circle cx="1114" cy="153" r="1.600" fill="#c06040"/><rect x="1112.500" y="155" width="3" height="3" fill="#1d1d1d"/><path d="M1109 157.500L1112.500 156.500" stroke="#aaa" stroke-width="0.700"/>
<rect x="1107.100" y="163" width="10.400" height="11" fill="#fff" stroke="#1a1a1a" stroke-width="1.200"/>
<rect x="1107.700" y="167.800" width="9.200" height="1.400" fill="#3a2a7a"/>
</svg>
<span class="t" style="left:1106.20px;top:112.18px;font-size:8.41px;color:#f2f2f2;transform:scaleX(0.733);transform-origin:0 0;font-weight:bold;">Layer 1</span>
<span class="t" style="left:1120.23px;top:151.22px;font-size:8.84px;color:#dcdcdc;transform:scaleX(0.767);transform-origin:0 0;font-weight:bold;">warrior-...</span>
<span class="t" style="left:1120.90px;top:138.02px;font-size:8.84px;color:#dcdcdc;transform:scaleX(0.750);transform-origin:0 0;font-weight:bold;">dragon-...</span>
<span class="t" style="left:1120px;top:151.500px;font-size:7px;color:#d6d6d6">warrior-...</span>
<span class="t" style="left:1120.90px;top:164.12px;font-size:8.84px;color:#dcdcdc;transform:scaleX(0.693);transform-origin:0 0;font-weight:bold;">cliff</span>
<svg style="left:1176px;top:112px" width="8" height="60" viewBox="0 0 8 60"><g fill="none" stroke="#cfcfcf" stroke-width="0.9"><circle cx="4" cy="4" r="2.600"/><circle cx="4" cy="17" r="2.600"/><circle cx="4" cy="30" r="2.600"/><circle cx="4" cy="43" r="2.600"/><circle cx="4" cy="56" r="2.600"/></g></svg>
<span class="t" style="left:1120.23px;top:124.82px;font-size:8.84px;color:#dcdcdc;transform:scaleX(0.767);transform-origin:0 0;font-weight:bold;">warrior-...</span>
<!-- panel footer -->
<span class="t" style="left:1046.20px;top:664.73px;font-size:8.12px;color:#dddddd;transform:scaleX(0.759);transform-origin:0 0;font-weight:bold;">1 Layer</span>
<svg style="left:1080px;top:664px" width="120" height="10" viewBox="0 0 120 10"><g fill="none" stroke="#cfcfcf" stroke-width="0.9">
<rect x="1.500" y="2" width="6" height="6"/><path d="M0 4H1.500M7.500 6H9"/>
<rect x="15" y="2" width="6" height="6"/><path d="M18 5L22 1M19.500 1H22V3.500"/>
<circle cx="32" cy="4.500" r="2.500" stroke="#666"/><rect x="44" y="2" width="6" height="6" stroke="#666"/>
<path d="M58 2V8M56 5H60"/><rect x="61" y="2" width="6" height="6"/>
<rect x="76.500" y="2" width="7" height="7"/><path d="M80 3.500V7.500M78 5.500H82"/>
<rect x="93" y="2" width="6" height="7" stroke="#666"/>
</g></svg>
<!-- LEFT TOOLBAR -->
<svg style="left:0;top:58px" width="46" height="360" viewBox="0 58 46 360">
<g fill="none" stroke="#c9c9c7" stroke-width="1.1" stroke-linejoin="round" stroke-linecap="round">

<path d="M5.300 60.300l-1.300 1.200 1.300 1.200M8 60.300l-1.300 1.200 1.300 1.200" stroke="#a8a8a8" stroke-width="0.8"/>
<path d="M16 69.300H28" stroke="#474745" stroke-width="1.600"/>
<!-- r1 selection -->
<path d="M10 81.5L17 86.5L13.5 87L11 90.5Z"/>
<path d="M28.5 81.5L35.5 86.5L32 87L29.5 90.5Z" fill="#c9c9c7"/>
<!-- r2 magic wand / lasso -->
<path d="M9 106L16 99"/><path d="M11.5 97.5l0.5 1M15.5 96.5v1M17.5 98.5h1" stroke-width="0.9"/>
<path d="M29 102c-2-1-2-4 1-5 3-1 6 0 6 2.500" /><path d="M31 100.5l6 2.500-2.500 0.800-1 2.700Z" fill="#c9c9c7"/>
<!-- r3 pen / curvature pen -->
<path d="M9.5 120.5L11 115.5L15 112L17.500 114.500L14 118.500Z" fill="#c9c9c7"/><path d="M9.5 120.5L12.5 117.5" stroke="#535351"/>
<path d="M29.5 120.5L31 115.5L35 112L37.500 114.500L34 118.500Z" fill="#c9c9c7"/><path d="M28.500 120c-2-3 1-4 0-8" stroke-width="0.9"/>
<!-- r4 type / line -->
<path d="M9.5 127V126H17.5V127M13.5 126V135.5M11.5 135.5H15.5" stroke-width="1.8"/>
<path d="M28 135L37 126"/>
<!-- r5 rect / brush -->
<rect x="9" y="141" width="9.500" height="9.500" fill="#6b6b69"/>
<path d="M37.500 140.500L38 141L32.500 147.500L31.500 146.500Z" fill="#c9c9c7" stroke-width="0.8"/><path d="M31 146.500C33 147.500 33 150 30.500 151C29 151.500 27.500 151.500 27 151.300C28.500 150 28 148 31 146.500Z" fill="#c9c9c7" stroke="none"/>
<!-- r6 shaper / eraser -->
<path d="M13 165a4 4 0 1 1 1-7" /><path d="M11 165L18 158" stroke-width="1.6"/>
<path d="M28.500 162.500L33.500 157.500L37 161L32 166Z" fill="#c9c9c7"/>
<!-- r7 rotate / scale -->
<path d="M11 171.500a4.800 4.800 0 1 1 -1.600 3.800"/><path d="M9 170.500v3h3" />
<rect x="28" y="175" width="5" height="5"/><rect x="31" y="171" width="6.500" height="6.500"/>
<!-- r8 width / free transform -->
<path d="M9 194c2-1 3-4 5-3s2 3 4 1M10 187c2 0 3 2 3 4"/>
<path d="M28.500 185.500L36 191L32.500 191.500L30 195Z" fill="#c9c9c7"/><rect x="30.500" y="186" width="7" height="8" stroke-dasharray="1 1"/>
<!-- r9 shape builder / perspective -->
<path d="M10 204c-1-3 2-4 5-4s4 2 3 3"/><path d="M14 203l4.500 3.500-2 0.500-1 2.500Z" fill="#c9c9c7"/>
<path d="M29 199.500V210.500H37.500M29 199.500L37.500 207M29 205H34" stroke-width="0.9"/>
<!-- r10 mesh / gradient -->
<rect x="9" y="216" width="9" height="8.500"/><path d="M9 219c3 1 6-1 9 1M12 216c1 3-1 6 1 8.500" stroke-width="0.8"/>
<rect x="28.500" y="216" width="9" height="8.500" fill="url(#gr)"/>
<!-- r11 measure / eyedropper -->
<path d="M9.500 239.500L17.500 231.500M9 237l3 3M15 230.500l3 3"/>
<path d="M28.500 240.500L30 237L35 232L37 234L32 239Z"/><path d="M34.500 230.500l3 3" stroke-width="1.8"/>
<!-- r12 blend / symbol -->
<rect x="9" y="246" width="4" height="6" fill="#c9c9c7"/><circle cx="14" cy="251" r="2.500"/><circle cx="17" cy="253" r="2.200"/>
<path d="M28.500 246.500h1M28.500 248.500h1M30.500 247.500h1" stroke-width="0.8"/><rect x="32" y="248" width="6" height="7.500" rx="1"/><circle cx="35" cy="251.500" r="1.200"/>
<!-- r13 graph / artboard -->
<path d="M9.500 261V270H18M11.500 263V269M13.500 264V269M15.500 262V269"/>
<path d="M29 262H37M31 260V268H38M33 262L37 266"/>
<!-- r14 pencil / hand -->
<path d="M9.500 284.500L10.500 281L16 275.500L18 277.500L12.500 283Z"/>
<path d="M29.500 280c1 3 3 5 5 5s3-2 3-4V277M31 281V276.500M33 280V275.500M35 280V276" stroke-width="1.1"/>
<!-- r15 align / zoom -->
<path d="M10 290V300"/><rect x="11" y="291" width="5" height="3" fill="#c9c9c7"/><rect x="11" y="296" width="7" height="3" fill="#c9c9c7"/>
<circle cx="31.500" cy="293.500" r="3.300"/><path d="M34 296L37.500 299.500" stroke-width="1.4"/>
</g>
<defs><linearGradient id="gr"><stop offset="0" stop-color="#111"/><stop offset="1" stop-color="#ddd"/></linearGradient><linearGradient id="gr2"><stop offset="0" stop-color="#555"/><stop offset="1" stop-color="#eee"/></linearGradient></defs>
<g fill="#c9c9c7">
<path d="M38 91h2.300v-2.300z M19 120.500h2.300v-2.300z M19 135.500h2.300v-2.300z M38 135.500h2.300v-2.300z M19 150.500h2.300v-2.300z M38 150.500h2.300v-2.300z M19 165.500h2.300v-2.300z M38 165.500h2.300v-2.300z M19 180.500h2.300v-2.300z M38 180.500h2.300v-2.300z M19 195.500h2.300v-2.300z M38 195.500h2.300v-2.300z M19 210.500h2.300v-2.300z M38 210.500h2.300v-2.300z M38 240.500h2.300v-2.300z M38 255.500h2.300v-2.300z M19 270.500h2.300v-2.300z M19 285.500h2.300v-2.300z M38 285.500h2.300v-2.300z"/>
</g>
<!-- fill / stroke -->
<rect x="15.500" y="319.500" width="22" height="22" fill="#fff" stroke="#333" stroke-width="1"/>
<rect x="20" y="324" width="13" height="13" fill="#535351" stroke="#222" stroke-width="0.8"/>
<rect x="4" y="307.500" width="22" height="22" fill="#fff" stroke="#333" stroke-width="1"/>
<path d="M15.500 341.500L37.500 319.500" stroke="#d0202a" stroke-width="1.4"/>
<path d="M33.800 310.300C36 310.300 37.300 311.500 37.300 314" fill="none" stroke="#c9c9c7" stroke-width="1.100"/><path d="M32.300 310.300L34.300 308.600V312Z M35.600 313.300H39L37.300 315.500Z" fill="#c9c9c7"/>
<rect x="4.500" y="334" width="5" height="5" fill="#fff" stroke="#333" stroke-width="0.8"/><rect x="7" y="336" width="5" height="5" fill="#535351" stroke="#ddd" stroke-width="0.8"/>
<!-- mode buttons -->
<rect x="5" y="347" width="10" height="9.500" fill="#3f3f3d"/><rect x="6.500" y="348.500" width="7" height="6.500" fill="#fff"/>
<rect x="19" y="348.500" width="7" height="6.500" fill="url(#gr2)"/>
<rect x="31" y="348.500" width="7" height="6.500" fill="#fff"/><path d="M31 355L38 348.500" stroke="#d0202a" stroke-width="1.3"/>
<rect x="5" y="362" width="10" height="10" fill="#3f3f3d"/>
<g fill="none" stroke="#c9c9c7" stroke-width="0.9">
<circle cx="9" cy="366" r="2.500"/><rect x="9.500" y="366.500" width="3.500" height="3.500" fill="#c9c9c7"/>
<circle cx="21.500" cy="366" r="2.500"/><rect x="22" y="366.500" width="3.500" height="3.500"/>
<circle cx="34.500" cy="367" r="2.800" stroke="#666"/>
<rect x="16" y="380.500" width="7" height="6.500"/><rect x="21" y="377.500" width="9" height="6.500" fill="#535351"/><path d="M21 379.500H30" />
</g>
<g fill="#c9c9c7"><circle cx="19" cy="402.500" r="1.100"/><circle cx="22.500" cy="402.500" r="1.100"/><circle cx="26" cy="402.500" r="1.100"/></g>
</svg>
</body></html>
